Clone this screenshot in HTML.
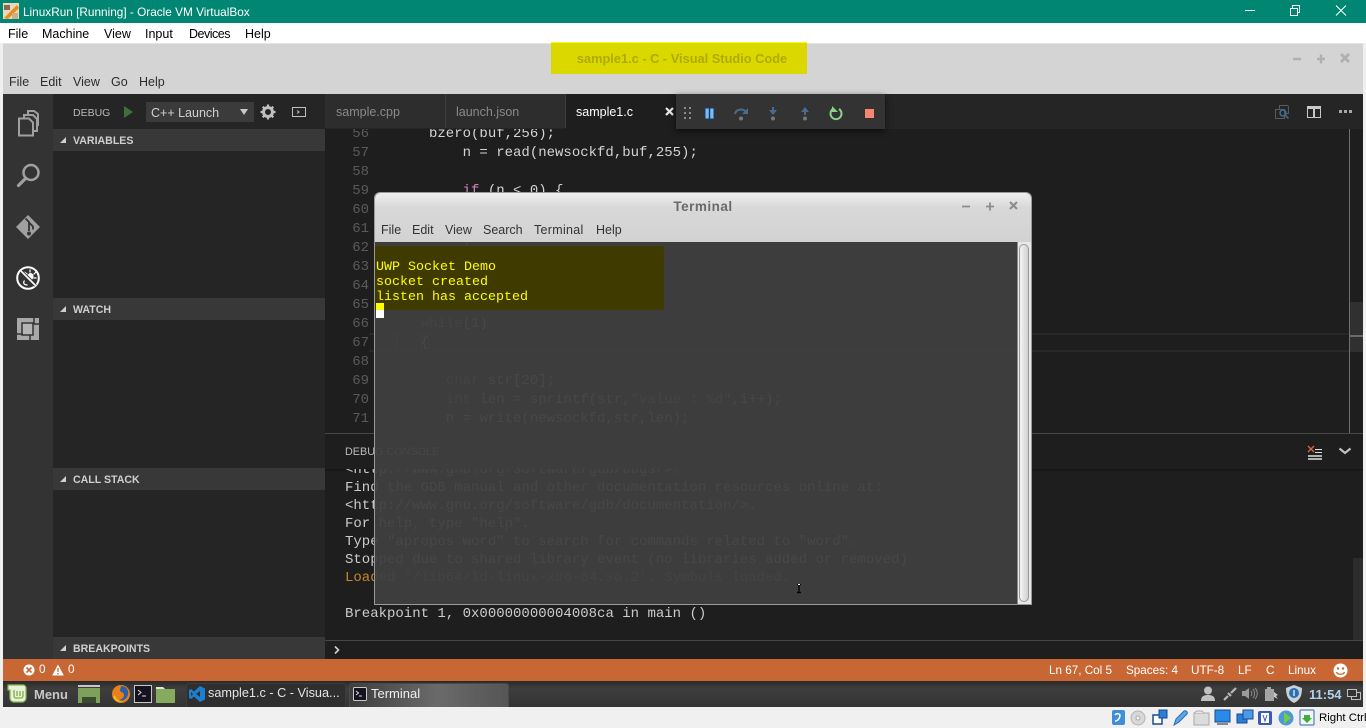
<!DOCTYPE html>
<html><head><meta charset="utf-8"><title>LinuxRun [Running] - Oracle VM VirtualBox</title>
<style>
html,body{margin:0;padding:0;width:1366px;height:728px;overflow:hidden;background:#f0f0f0;font-family:"Liberation Sans",sans-serif}
.a{position:absolute}
.t{position:absolute;white-space:pre}
.c{left:387px;height:19px;line-height:19px;color:#d4d4d4;font-family:"Liberation Mono",monospace;font-size:14px;position:absolute;white-space:pre}
.n{left:340px;width:29px;text-align:right;height:19px;line-height:19px;color:#5a5a5a;font-family:"Liberation Mono",monospace;font-size:14px;position:absolute}
.l{left:345px;height:18px;line-height:18px;color:#cccccc;font-family:"Liberation Mono",monospace;font-size:14px;position:absolute;white-space:pre}
.h{position:absolute;left:53px;width:272px;height:22px;background:#383838}
.h b{position:absolute;left:20px;top:1px;line-height:22px;font-size:10.6px;color:#cfcfcf}
.h i{position:absolute;left:7px;top:8px;width:0;height:0;border-left:6px solid transparent;border-bottom:6px solid #d0d0d0}
.vm{top:27px;font-size:12.5px;line-height:14px;color:#000}
.vs{top:75px;font-size:12.5px;line-height:14px;color:#2c2c2c}
.tm{top:223px;font-size:12.5px;line-height:14px;color:#333}
.st{top:664px;font-size:11.7px;line-height:14px;color:#fff}
</style></head>
<body>
<!-- VirtualBox chrome -->
<div class="a" style="left:0;top:0;width:1366px;height:23px;background:#008672"></div>
<svg class="a" style="left:2px;top:2px" width="18" height="18" viewBox="0 0 18 18"><rect x="1" y="1" width="16" height="16" fill="#e8d9b8"/><path d="M2 16L15 3l2 3L6 17z" fill="#e88a1e"/><path d="M2 3h6v5H2z" fill="#8a6a50"/><path d="M10 11h6v6h-6z" fill="#d0b080"/></svg>
<div class="t" style="left:23px;top:5px;font-size:11.8px;line-height:14px;color:#fff">LinuxRun [Running] - Oracle VM VirtualBox</div>
<svg class="a" style="left:1240px;top:0" width="120" height="22" fill="none" stroke="#fff" stroke-width="1"><path d="M5 10.5h10"/><path d="M50.5 8.500h7v7h-7zM52.500 8V5.500h7v7H58"/><path d="M96 5.500l10 10M106 5.500l-10 10"/></svg>
<div class="a" style="left:0;top:23px;width:1366px;height:20px;background:#fff"></div>
<div class="t vm" style="left:8px">File</div>
<div class="t vm" style="left:42px">Machine</div>
<div class="t vm" style="left:104px">View</div>
<div class="t vm" style="left:145px">Input</div>
<div class="t vm" style="left:189px;letter-spacing:-.5px">Devices</div>
<div class="t vm" style="left:245px">Help</div>

<!-- VS Code titlebar -->
<div class="a" style="left:3px;top:43px;width:1360px;height:51px;background:#d4d4d4;border-top:1px solid #e4e4e4;box-sizing:border-box"></div>
<div class="a" style="left:551px;top:42px;width:256px;height:32px;background:#dbd800;border-top:1px solid #ffff00;box-sizing:border-box"></div>
<div class="t" style="left:554px;width:256px;text-align:center;top:51px;font-size:12.8px;line-height:15px;font-weight:bold;color:#aeab00">sample1.c - C - Visual Studio Code</div>
<svg class="a" style="left:1285px;top:50px" width="70" height="16" stroke="#b0b0b0" stroke-width="2.400" fill="none"><path d="M8 9h8M32 9h8M36 4.500v9"/><path d="M56 4l8 8M64 4l-8 8" stroke-width="3"/></svg>
<div class="t vs" style="left:9px">File</div>
<div class="t vs" style="left:40px">Edit</div>
<div class="t vs" style="left:73px">View</div>
<div class="t vs" style="left:111px">Go</div>
<div class="t vs" style="left:139px">Help</div>

<!-- Activity bar -->
<div class="a" style="left:3px;top:94px;width:50px;height:565px;background:#333"></div>
<svg class="a" style="left:3px;top:94px" width="50" height="260" fill="none">
<g stroke="#a0a0a0" stroke-width="2" transform="translate(-1 2)"><path d="M17 22.500h10l4 4v13H17z"/><path d="M22 22v-3h9l4 4v12h-3"/><path d="M26 18v-3h6l4 3v12"/></g>
<circle cx="28" cy="78.500" r="7.500" stroke="#a0a0a0" stroke-width="2.500"/><path d="M22.500 84.500l-7 7" stroke="#a0a0a0" stroke-width="3.200" stroke-linecap="round"/>
<path d="M25 121l12 12-12 12-12-12z" fill="#a0a0a0"/><path d="M22.500 124.500l3.500 3.500v9M26 128.500l4 4v3" stroke="#333" stroke-width="1.800"/><circle cx="26" cy="139.500" r="2" fill="#333"/>
<circle cx="25" cy="184" r="10.800" stroke="#fff" stroke-width="2"/>
<ellipse cx="27.500" cy="182.500" rx="3" ry="3.500" fill="#fff"/><path d="M27 175.500v3M21.500 178l3 2.500M33 178l-2.500 2.500M33.500 184h-3M21.500 186.500c-2 3 0 4.500 3 4.500M29 189h3" stroke="#fff" stroke-width="1.200"/>
<path d="M18 177l14.500 14.500" stroke="#333" stroke-width="3.500"/><path d="M17.500 176.500l15 15" stroke="#fff" stroke-width="1.700"/>
<rect x="14" y="224" width="22" height="22" fill="#a8a8a8"/><rect x="19" y="229" width="11" height="12" fill="#b4b4b4" stroke="#333" stroke-width="1.500"/><path d="M31 224v6h5M14 240h6M27 241v5" stroke="#333" stroke-width="1.500"/>
</svg>

<!-- Sidebar -->
<div class="a" style="left:53px;top:94px;width:272px;height:565px;background:#252526"></div>
<div class="t" style="left:73px;top:106px;font-size:10.5px;line-height:14px;color:#b8b8b8">DEBUG</div>
<svg class="a" style="left:123px;top:105px" width="10" height="14"><path d="M1 1l9 6-9 6z" fill="#3f6f3a"/></svg>
<div class="a" style="left:146px;top:102px;width:108px;height:20px;background:#3b3b3b"></div>
<div class="t" style="left:151px;top:106px;font-size:12.5px;line-height:15px;color:#d0d0d0">C++ Launch</div>
<div class="a" style="left:240px;top:109px;border-left:4px solid transparent;border-right:4px solid transparent;border-top:6px solid #c8c8c8"></div>
<svg class="a" style="left:260px;top:104px" width="16" height="16" viewBox="0 0 16 16"><circle cx="8" cy="8" r="4.500" fill="none" stroke="#c0c0c0" stroke-width="3"/><path d="M8 .5v3M8 12.500v3M.5 8h3M12.500 8h3M2.700 2.700l2.100 2.100M11.200 11.200l2.100 2.100M13.300 2.700l-2.100 2.100M4.800 11.200l-2.100 2.100" stroke="#c0c0c0" stroke-width="2.200"/></svg>
<svg class="a" style="left:292px;top:106px" width="14" height="12" fill="none" stroke="#c0c0c0"><rect x=".5" y="1.500" width="13" height="9"/><path d="M5 4.500l2 1.500-2 1.500"/></svg>
<div class="h" style="top:129px"><i></i><b>VARIABLES</b></div>
<div class="h" style="top:298px"><i></i><b>WATCH</b></div>
<div class="h" style="top:468px"><i></i><b>CALL STACK</b></div>
<div class="h" style="top:637px"><i></i><b>BREAKPOINTS</b></div>

<!-- Editor -->
<div class="a" style="left:325px;top:94px;width:1038px;height:565px;background:#1e1e1e"></div>

<!-- code -->
<div class="n" style="top:125px">56</div><div class="c" style="top:125px">     bzero(buf,256);</div>
<div class="n" style="top:144px">57</div><div class="c" style="top:144px">         n = read(newsockfd,buf,255);</div>
<div class="n" style="top:163px">58</div>
<div class="n" style="top:182px">59</div><div class="c" style="top:182px">         <span style="color:#c586c0">if</span> (n &lt; 0) {</div>
<div class="n" style="top:201px">60</div>
<div class="n" style="top:220px">61</div>
<div class="n" style="top:239px">62</div><div class="c" style="top:239px">         }</div>
<div class="n" style="top:258px">63</div>
<div class="n" style="top:277px">64</div>
<div class="n" style="top:296px">65</div>
<div class="n" style="top:315px">66</div><div class="c" style="top:315px">    <span style="color:#569cd6">while</span>(1)</div>
<div class="n" style="top:334px">67</div><div class="c" style="top:334px">    {</div>
<div class="a" style="left:421px;top:334px;width:8px;height:18px;border:1px solid #5a5a5a;box-sizing:border-box"></div>
<div class="a" style="left:396px;top:335px;width:1px;height:16px;background:#666"></div>
<div class="n" style="top:353px">68</div>
<div class="n" style="top:372px">69</div><div class="c" style="top:372px">       <span style="color:#569cd6">char</span> str[20];</div>
<div class="n" style="top:391px">70</div><div class="c" style="top:391px">       <span style="color:#569cd6">int</span> len = sprintf(str,<span style="color:#ce9178">"value : %d"</span>,i++);</div>
<div class="n" style="top:410px">71</div><div class="c" style="top:410px">       n = write(newsockfd,str,len);</div>
<div class="a" style="left:369px;top:333px;width:980px;height:19px;border-top:2px solid #282828;border-bottom:2px solid #282828;box-sizing:border-box"></div>
<div class="a" style="left:1349px;top:129px;width:1px;height:304px;background:#6e6e6e"></div>
<div class="a" style="left:1350px;top:302px;width:13px;height:50px;background:#303030"></div>
<div class="a" style="left:1350px;top:335px;width:13px;height:2px;background:#6a6a6a"></div>

<!-- tabs -->
<div class="a" style="left:325px;top:94px;width:1038px;height:35px;background:#252526"></div>
<div class="a" style="left:325px;top:94px;width:120px;height:34px;background:#2d2d2d;border-right:1px solid #3c3c3c"></div>
<div class="a" style="left:446px;top:94px;width:119px;height:34px;background:#2d2d2d;border-right:1px solid #3c3c3c"></div>
<div class="a" style="left:566px;top:94px;width:110px;height:35px;background:#1e1e1e"></div>
<div class="t" style="left:336px;top:105px;font-size:12.5px;line-height:15px;color:#8a8a8a">sample.cpp</div>
<div class="t" style="left:456px;top:105px;font-size:12.5px;line-height:15px;color:#8a8a8a">launch.json</div>
<div class="t" style="left:576px;top:105px;font-size:12.5px;line-height:15px;color:#fff">sample1.c</div>
<svg class="a" style="left:665px;top:107px" width="10" height="10" stroke="#e8e8e8" stroke-width="2.200"><path d="M1 1l7 7M8 1l-7 7"/></svg>
<!-- debug toolbar -->
<div class="a" style="left:676px;top:94px;width:209px;height:35px;background:#333;box-shadow:0 2px 6px rgba(0,0,0,.6)"></div>
<svg class="a" style="left:676px;top:94px" width="209" height="35" fill="none">
<g fill="#8a8a8a"><rect x="8" y="13" width="2" height="2"/><rect x="13" y="13" width="2" height="2"/><rect x="8" y="18" width="2" height="2"/><rect x="13" y="18" width="2" height="2"/><rect x="8" y="23" width="2" height="2"/><rect x="13" y="23" width="2" height="2"/></g>
<rect x="29" y="14" width="9" height="11" fill="#75beff" stroke="#1e3a5a"/><path d="M33.500 14v11" stroke="#1e3a5a" stroke-width="1.500"/>
<path d="M59 20c1-5 8-6 11-2" stroke="#4a6c8c" stroke-width="2"/><path d="M72 14v6h-6z" fill="#4a6c8c"/><circle cx="65" cy="24.500" r="2" fill="#777"/>
<path d="M97 13v6" stroke="#4a6c8c" stroke-width="2"/><path d="M93 16l4 5 4-5z" fill="#4a6c8c"/><circle cx="97" cy="24.500" r="2" fill="#777"/>
<path d="M129 15v6" stroke="#4a6c8c" stroke-width="2"/><path d="M125 18l4-5 4 5z" fill="#4a6c8c"/><circle cx="129" cy="24.500" r="2" fill="#777"/>
<path d="M157 15a5.500 5.500 0 1 0 6 0" stroke="#89d185" stroke-width="2"/><path d="M156 12v6h6z" fill="#89d185"/>
<rect x="189" y="15" width="9" height="9" fill="#f48771"/>
</svg>
<svg class="a" style="left:1274px;top:104px" width="16" height="16" fill="none" stroke="#5a5a5a"><path d="M1.500 5.500h9v9h-9zM5.500 5V1.500h8l1 1v7h-3"/><circle cx="9" cy="9" r="3" stroke="#3f6d9c" stroke-width="1.500"/><path d="M11 11l3.500 3.500" stroke="#3f6d9c" stroke-width="1.500"/></svg>
<svg class="a" style="left:1307px;top:106px" width="14" height="12" fill="none" stroke="#c8c8c8"><rect x=".5" y=".5" width="13" height="11"/><rect x="0" y="0" width="14" height="3" fill="#c8c8c8" stroke="none"/><path d="M7 1v10" stroke-width="2"/></svg>
<svg class="a" style="left:1339px;top:109px" width="14" height="5" fill="#a8a8a8"><rect x="0" y="1" width="3" height="3"/><rect x="5" y="1" width="3" height="3"/><rect x="10" y="1" width="3" height="3"/></svg>

<!-- panel -->
<div class="a" style="left:325px;top:433px;width:1038px;height:1px;background:#474747"></div>
<div class="a" style="left:325px;top:434px;width:1038px;height:226px;background:#1e1e1e"></div>
<div class="t" style="left:345px;top:445px;font-size:10.8px;line-height:14px;color:#bbb">DEBUG CONSOLE</div>
<div class="a" style="left:325px;top:469px;width:1038px;height:3px;background:linear-gradient(#141414,#1e1e1e)"></div>
<svg class="a" style="left:1307px;top:444px" width="16" height="16" fill="none"><path d="M8 5.500h7M8 8.500h7" stroke="#e0e0e0"/><path d="M1 12h14M1 15h14" stroke="#e0e0e0" stroke-width="1.500"/><path d="M1 2l6 6M7 2L1 8" stroke="#e0634b" stroke-width="1.300"/></svg>
<svg class="a" style="left:1338px;top:446px" width="14" height="10" fill="none" stroke="#c0c0c0" stroke-width="2.200"><path d="M1.500 2.500l5.500 4.500 5.500-4.500"/></svg>
<div class="l" style="top:461px;clip-path:inset(8px 0 0 0)">&lt;http://www.gnu.org/software/gdb/bugs/&gt;.</div>
<div class="l" style="top:479px">Find the GDB manual and other documentation resources online at:</div>
<div class="l" style="top:497px">&lt;http://www.gnu.org/software/gdb/documentation/&gt;.</div>
<div class="l" style="top:515px">For help, type "help".</div>
<div class="l" style="top:533px">Type "apropos word" to search for commands related to "word".</div>
<div class="l" style="top:551px">Stopped due to shared library event (no libraries added or removed)</div>
<div class="l" style="top:569px;color:#c48a2c">Loaded '/lib64/ld-linux-x86-64.so.2'. Symbols loaded.</div>
<div class="l" style="top:605px">Breakpoint 1, 0x00000000004008ca in main ()</div>
<div class="a" style="left:1353px;top:558px;width:10px;height:82px;background:#2c2c2c"></div>
<div class="a" style="left:325px;top:640px;width:1038px;height:1px;background:#474747"></div>
<svg class="a" style="left:333px;top:645px" width="8" height="10" fill="none" stroke="#d0d0d0" stroke-width="1.600"><path d="M2 1.500l3.500 3.500L2 8.500"/></svg>

<!-- Status bar -->
<div class="a" style="left:3px;top:659px;width:1360px;height:22px;background:#c96734"></div>
<svg class="a" style="left:23px;top:664px" width="12" height="12"><circle cx="6" cy="6" r="5.500" fill="#fff"/><path d="M3.500 3.500l5 5M8.500 3.500l-5 5" stroke="#c96734" stroke-width="1.600"/></svg>
<div class="t st" style="left:39px;top:663px">0</div>
<svg class="a" style="left:52px;top:664px" width="12" height="12"><path d="M6 .5L11.800 11.500H.2z" fill="#fff"/><path d="M6 4v4M6 9v1.500" stroke="#c96734" stroke-width="1.300"/></svg>
<div class="t st" style="left:68px;top:663px">0</div>
<div class="t st" style="left:1049px">Ln 67, Col 5</div>
<div class="t st" style="left:1126px">Spaces: 4</div>
<div class="t st" style="left:1191px">UTF-8</div>
<div class="t st" style="left:1238px">LF</div>
<div class="t st" style="left:1266px">C</div>
<div class="t st" style="left:1288px">Linux</div>
<svg class="a" style="left:1333px;top:663px" width="15" height="15"><circle cx="7.500" cy="7.500" r="7" fill="#fff"/><circle cx="5" cy="5.500" r="1.200" fill="#c96734"/><circle cx="10" cy="5.500" r="1.200" fill="#c96734"/><path d="M3.500 9c1 3 7 3 8 0" fill="none" stroke="#c96734" stroke-width="1.300"/></svg>

<!-- Taskbar -->
<div class="a" style="left:3px;top:681px;width:1360px;height:26px;background:linear-gradient(#2a2a2a,#3e3e3e 30%,#333)"></div>
<svg class="a" style="left:7px;top:684px" width="20" height="20"><path d="M1 1h15a3 3 0 0 1 3 3v10a4 4 0 0 1-4 4H7a4 4 0 0 1-4-4V6H1z" fill="#e8f0dc" stroke="#86b84a" stroke-width="1.200"/><path d="M7 6v6a2 2 0 0 0 2 2h5a2 2 0 0 0 2-2V7M10 7v5M13 7v5" fill="none" stroke="#7fb03c" stroke-width="1.300"/></svg>
<div class="t" style="left:34px;top:687px;font-size:13px;line-height:15px;font-weight:bold;color:#c8c8c8">Menu</div>
<svg class="a" style="left:78px;top:685px" width="22" height="18"><rect x="0" y="0" width="22" height="2" fill="#c8c8c8"/><rect x="0" y="3" width="22" height="15" fill="#7fa05c"/><rect x="4" y="12" width="14" height="6" fill="#3c4a30"/></svg>
<svg class="a" style="left:112px;top:685px" width="18" height="18"><circle cx="9" cy="9" r="9" fill="#e8801c"/><path d="M9 1c6 0 8 5 7 9-2 5-6 7-10 5 3 0 6-2 6-5 0-2-2-3-3-3-2-2 0-4 0-6z" fill="#2d5fa8"/><path d="M1 12c2 4 6 6 10 4-4 0-7-2-8-6z" fill="#f5b81c"/></svg>
<svg class="a" style="left:134px;top:685px" width="18" height="18"><rect x=".5" y=".5" width="17" height="17" fill="#15131f" stroke="#c8c8c8"/><path d="M4 5l3 2.500L4 10" fill="none" stroke="#ddd"/><path d="M8 11h4" stroke="#ddd"/></svg>
<svg class="a" style="left:156px;top:685px" width="19" height="18"><path d="M0 2h7l2 2h10v14H0z" fill="#86ab5c"/><path d="M0 2h7l2 2H0z" fill="#dce6cf"/></svg>
<div class="a" style="left:186px;top:683px;width:160px;height:24px;background:#2f2f2f;border:1px solid #3c3c3c;border-bottom:0;border-radius:3px 3px 0 0;box-sizing:border-box"></div>
<svg class="a" style="left:189px;top:686px" width="16" height="16"><path d="M11 0l5 2.500v11L11 16 5 10.500 2 13 0 12V4l2-1 3 2.500z" fill="#1e7fd0"/><path d="M11 5v6L7 8z" fill="#2f2f2f"/><path d="M2 6v4l2-2z" fill="#2f2f2f"/></svg>
<div class="t" style="left:208px;top:686px;font-size:12.7px;line-height:15px;color:#e4e4e4">sample1.c - C - Visua...</div>
<div class="a" style="left:349px;top:683px;width:160px;height:24px;background:linear-gradient(90deg,#3e3e3e,#6a6a6a 55%,#555);border:1px solid #4a4a4a;border-bottom:0;border-radius:3px 3px 0 0;box-sizing:border-box"></div>
<svg class="a" style="left:353px;top:687px" width="14" height="14"><rect x=".5" y=".5" width="13" height="13" rx="1" fill="#15131f" stroke="#c8c8c8"/><path d="M3 4l2.500 2L3 8" fill="none" stroke="#ddd"/><path d="M6 9h3" stroke="#ddd"/></svg>
<div class="t" style="left:371px;top:686px;font-size:13px;line-height:15px;color:#eee">Terminal</div>
<svg class="a" style="left:1201px;top:686px" width="14" height="15"><circle cx="7" cy="4.500" r="4" fill="#c0c0c0"/><path d="M0 15c0-5 3-6 7-6s7 1 7 6z" fill="#c0c0c0"/></svg>
<svg class="a" style="left:1223px;top:687px" width="14" height="14"><path d="M1 13l4-4M5 6l3 3M8 6l5-5" stroke="#b8b8b8" stroke-width="2.200" fill="none"/></svg>
<svg class="a" style="left:1242px;top:687px" width="16" height="13"><path d="M0 4h3l4-3v11L3 9H0z" fill="#9a9a9a"/><path d="M9 4c1 1 1 4 0 5M11 2c2 2 2 7 0 9M13 1c3 3 3 8 0 11" stroke="#8a8a8a" fill="none"/></svg>
<svg class="a" style="left:1264px;top:686px" width="16" height="16"><rect x="1" y="3" width="9" height="12" fill="#a4a4a4"/><rect x="3" y="1" width="4" height="2" fill="#a4a4a4"/><path d="M10 6l4 3-2 1 2 3-4-2z" fill="#c8c8c8"/></svg>
<svg class="a" style="left:1286px;top:685px" width="16" height="18"><path d="M8 0l8 3c0 8-2 12-8 15C2 15 0 11 0 3z" fill="#c8d0d8"/><circle cx="8" cy="8" r="5" fill="#2f6fb0"/><path d="M8 5v6" stroke="#d0e0f0" stroke-width="1.500"/></svg>
<div class="t" style="left:1309px;top:687px;font-size:13px;line-height:15px;font-weight:bold;color:#b4d0e8">11:54</div>
<svg class="a" style="left:1347px;top:689px" width="14" height="11" fill="#333" stroke="#c0c0c0"><rect x="4.500" y="3.500" width="9" height="7"/><rect x=".5" y=".5" width="9" height="7"/></svg>

<!-- terminal window -->
<div class="a" style="left:375px;top:193px;width:656px;height:411px;border-radius:5px 5px 0 0;background:rgba(63,63,63,.95);box-shadow:0 0 0 1px #9a9a9a"></div>
<div class="a" style="left:375px;top:193px;width:656px;height:49px;background:linear-gradient(#efefef,#d8d8d8 30%,#d2d2d2);border-radius:5px 5px 0 0"></div>
<div class="t" style="left:375px;width:656px;text-align:center;top:199px;font-size:13.5px;line-height:15px;font-weight:bold;letter-spacing:.5px;color:#6a6a6a">Terminal</div>
<svg class="a" style="left:960px;top:199px" width="60" height="14" stroke="#8c8c8c" stroke-width="1.800" fill="none"><path d="M2 7.500h8M26 7.500h8M30 3.500v8"/><path d="M50 3l7 7M57 3l-7 7" stroke-width="2.200"/></svg>
<div class="t tm" style="left:381px">File</div>
<div class="t tm" style="left:412px">Edit</div>
<div class="t tm" style="left:445px">View</div>
<div class="t tm" style="left:483px">Search</div>
<div class="t tm" style="left:534px;letter-spacing:.3px">Terminal</div>
<div class="t tm" style="left:596px">Help</div>
<div class="a" style="left:375px;top:246px;width:289px;height:64px;background:#3f3b00"></div>
<div class="t" style="left:376px;top:260px;font-family:'Liberation Mono',monospace;font-size:13.33px;line-height:15px;color:#ffff00">UWP Socket Demo
socket created
listen has accepted</div>
<div class="a" style="left:376px;top:303px;width:8px;height:7px;background:#ffff00"></div>
<div class="a" style="left:376px;top:310px;width:8px;height:8px;background:#fff"></div>
<div class="a" style="left:1017px;top:242px;width:14px;height:362px;background:#e8e8e8;border-left:1px solid #8a8a8a;box-sizing:border-box"></div>
<div class="a" style="left:1019px;top:244px;width:10px;height:358px;background:linear-gradient(90deg,#f4f4f4,#d0d0d0);border:1px solid #9a9a9a;border-radius:5px;box-sizing:border-box"></div>
<svg class="a" style="left:796px;top:584px" width="6" height="10"><path d="M1 .5h4M3 .5v8M1 8.500h4" stroke="#000" stroke-width="1.300"/><path d="M2 .5h2" stroke="#fff"/></svg>

<!-- bottom status tray -->
<div class="a" style="left:0;top:707px;width:1366px;height:21px;background:#f0f0f0"></div>
<svg class="a" style="left:1110px;top:709px" width="205" height="18">
<rect x="2" y="1" width="13" height="15" rx="2" fill="#3f8fd8"/><path d="M5 12c3 0 5-3 5-6a3 3 0 0 0-5 0" fill="none" stroke="#fff" stroke-width="1.500"/>
<circle cx="28" cy="9" r="7" fill="#d8d8d8" stroke="#b4b4b4"/><circle cx="28" cy="9" r="2" fill="#f4f4f4" stroke="#aaa"/>
<rect x="43" y="6" width="9" height="9" fill="#fff" stroke="#1a4a8a" stroke-width="1.500"/><rect x="49" y="1" width="8" height="8" fill="#2a7fd8" stroke="#1a4a8a"/>
<path d="M64 16l2-6 8-8c2-1 4 1 3 3l-8 8z" fill="#5aa8e8" stroke="#2a6ab0"/>
<rect x="84" y="4" width="15" height="12" fill="#dcdcdc" stroke="#aaa"/><path d="M84 4l3-2h5l2 2" fill="#e8e8e8" stroke="#aaa"/>
<rect x="105" y="1" width="15" height="12" fill="#2a8ae8" stroke="#1a4a8a"/><rect x="107" y="14" width="11" height="2" fill="#888"/>
<rect x="127" y="5" width="10" height="9" fill="#2a7fd8" stroke="#1a4a8a"/><rect x="133" y="1" width="10" height="9" fill="#4a9ae8" stroke="#1a4a8a"/>
<rect x="148" y="2" width="14" height="14" rx="2" fill="#3a5ab8"/><rect x="151" y="4" width="8" height="10" fill="#fff"/><path d="M153 6l2 6 2-6" fill="none" stroke="#3a5ab8"/>
<circle cx="176" cy="9" r="7.500" fill="#4a9ad8"/><path d="M174 3l7 6-7 6z" fill="#7ac83c"/>
<rect x="190" y="1" width="14" height="15" rx="1" fill="#f4f4f4" stroke="#2a6ab0"/><path d="M194 6h6v3h2l-5 5-5-5h2z" fill="#3ab03c"/>
</svg>
<div class="t" style="left:1319px;top:711px;font-size:11.4px;line-height:14px;color:#000">Right Ctrl</div>
</body></html>
